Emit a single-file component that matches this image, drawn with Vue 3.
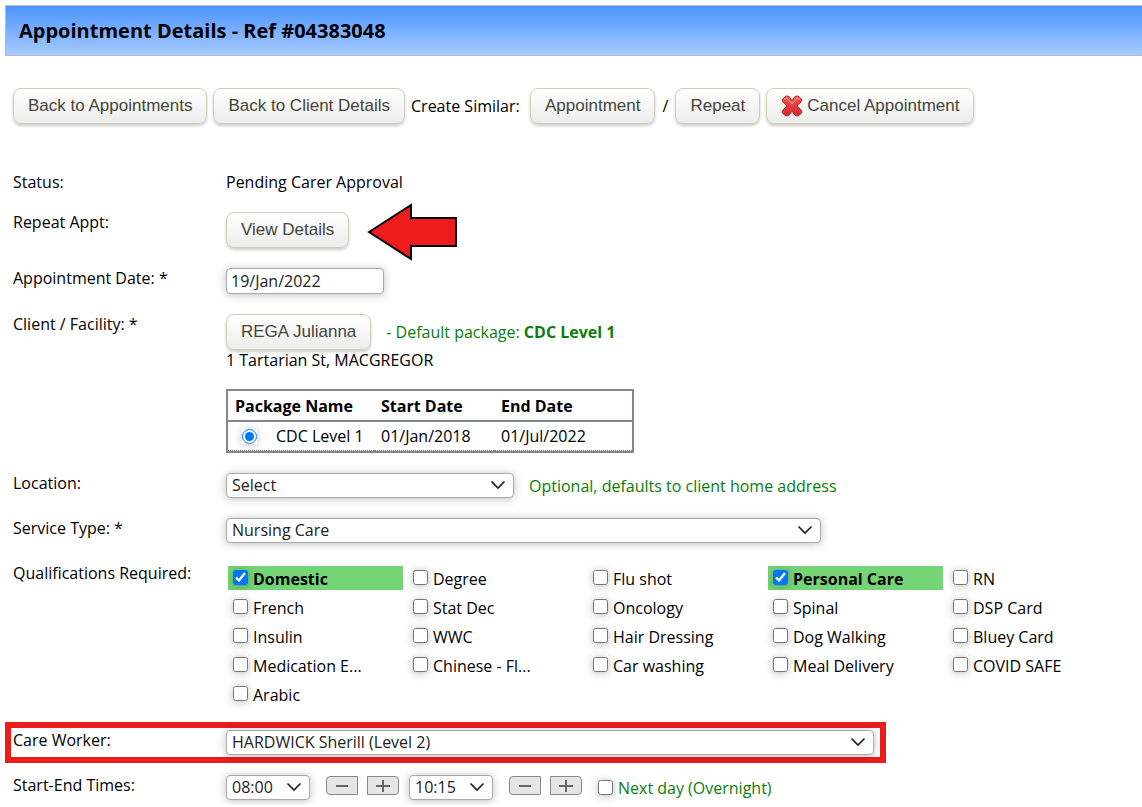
<script setup>
import { ref } from 'vue'

const packages = [{ name: 'CDC Level 1', start: '01/Jan/2018', end: '01/Jul/2022' }]
const chosenPackage = ref('CDC Level 1')
const date = ref('19/Jan/2022')
const overnight = ref(false)

const qualifications = ref(
  [
    'Domestic', 'Degree', 'Flu shot', 'Personal Care', 'RN',
    'French', 'Stat Dec', 'Oncology', 'Spinal', 'DSP Card',
    'Insulin', 'WWC', 'Hair Dressing', 'Dog Walking', 'Bluey Card',
    'Medication E...', 'Chinese - Fl...', 'Car washing', 'Meal Delivery', 'COVID SAFE',
    'Arabic'
  ].map((name) => ({ name, on: name === 'Domestic' || name === 'Personal Care' }))
)
</script>

<template>
  <div class="page">
    <header class="title-bar">
      <h1>Appointment Details - Ref #04383048</h1>
    </header>

    <nav class="toolbar">
      <button type="button" class="btn">Back to Appointments</button>
      <button type="button" class="btn">Back to Client Details</button>
      <span class="caption">Create Similar:</span>
      <button type="button" class="btn">Appointment</button>
      <span class="slash">/</span>
      <button type="button" class="btn">Repeat</button>
      <button type="button" class="btn">
        <svg class="cross" viewBox="0 0 22 22" aria-hidden="true">
          <defs>
            <linearGradient id="crossFill" x1="0" y1="0" x2="0" y2="1">
              <stop offset="0" stop-color="#ef5350" />
              <stop offset="1" stop-color="#d6282c" />
            </linearGradient>
          </defs>
          <path d="M5.2 1 L8 1.4 L11 5.6 L14 1.4 L17 1 L20.8 4.4 L20.4 6.4 L16 11 L20.4 15.4 L20.8 17.8 L17.2 21 L14.4 20.6 L11 16.4 L7.6 20.6 L4.8 21 L1.2 17.8 L1.6 15.4 L6 11 L1.6 6.4 L1.2 4.4 Z" fill="url(#crossFill)" stroke="#b52226" stroke-linejoin="round" />
          <path d="M3.4 4.6 L5.8 2.8 L11 8.6 L16.2 2.8 L18.6 4.8" fill="none" stroke="#f8908c" stroke-width="1.2" />
        </svg>
        Cancel Appointment
      </button>
    </nav>

    <form class="form" @submit.prevent>
      <div class="row">
        <span class="label">Status:</span>
        <div class="value">Pending Carer Approval</div>
      </div>

      <div class="row">
        <span class="label">Repeat Appt:</span>
        <div class="value line">
          <span class="pointed">
            <button type="button" class="btn">View Details</button>
            <svg class="arrow" viewBox="0 0 90 58" aria-hidden="true">
              <path d="M2 29 L44 2 V15 H89 V43 H44 V56 Z" fill="#ed1c1c" stroke="#000" stroke-width="2" />
            </svg>
          </span>
        </div>
      </div>

      <div class="row">
        <label class="label" for="date">Appointment Date: *</label>
        <div class="value line"><input id="date" v-model="date" class="field date" type="text" /></div>
      </div>

      <div class="row">
        <span class="label">Client / Facility: *</span>
        <div class="value">
          <div class="line spaced">
            <button type="button" class="btn">REGA Julianna</button>
            <span class="hint">- Default package: <b>CDC Level 1</b></span>
          </div>
          <div>1 Tartarian St, MACGREGOR</div>
          <table class="packages">
            <colgroup><col class="col-pick" /><col class="col-name" /><col class="col-start" /><col /></colgroup>
            <thead>
              <tr><th colspan="2">Package Name</th><th>Start Date</th><th>End Date</th></tr>
            </thead>
            <tbody>
              <tr v-for="p in packages" :key="p.name">
                <td class="pick"><input id="pkg" v-model="chosenPackage" type="radio" name="package" :value="p.name" /></td>
                <td><label for="pkg">{{ p.name }}</label></td>
                <td>{{ p.start }}</td>
                <td>{{ p.end }}</td>
              </tr>
            </tbody>
          </table>
        </div>
      </div>

      <div class="row">
        <label class="label" for="location">Location:</label>
        <div class="value line spaced">
          <span class="picker w-location">
            <select id="location" class="field"><option>Select</option></select>
            <svg class="chevron" viewBox="0 0 16 10" aria-hidden="true"><path d="M1.5 1.5 L8 8 L14.5 1.5" /></svg>
          </span>
          <span class="hint">Optional, defaults to client home address</span>
        </div>
      </div>

      <div class="row">
        <label class="label" for="service">Service Type: *</label>
        <div class="value line">
          <span class="picker w-service">
            <select id="service" class="field"><option>Nursing Care</option></select>
            <svg class="chevron" viewBox="0 0 16 10" aria-hidden="true"><path d="M1.5 1.5 L8 8 L14.5 1.5" /></svg>
          </span>
        </div>
      </div>

      <div class="row">
        <span class="label">Qualifications Required:</span>
        <div class="value quals">
          <label v-for="q in qualifications" :key="q.name" class="qual" :class="{ on: q.on }">
            <input v-model="q.on" type="checkbox" />
            <span>{{ q.name }}</span>
          </label>
        </div>
      </div>

      <div class="row callout">
        <label class="label" for="worker">Care Worker:</label>
        <div class="value line">
          <span class="picker w-worker">
            <select id="worker" class="field"><option>HARDWICK Sherill (Level 2)</option></select>
            <svg class="chevron" viewBox="0 0 16 10" aria-hidden="true"><path d="M1.5 1.5 L8 8 L14.5 1.5" /></svg>
          </span>
        </div>
      </div>

      <div class="row">
        <label class="label" for="start">Start-End Times:</label>
        <div class="value line times">
          <span class="picker w-time">
            <select id="start" class="field"><option>08:00</option></select>
            <svg class="chevron" viewBox="0 0 16 10" aria-hidden="true"><path d="M1.5 1.5 L8 8 L14.5 1.5" /></svg>
          </span>
          <span class="steps">
            <button type="button" class="step minus" aria-label="Earlier start"><svg viewBox="0 0 14 14" aria-hidden="true"><path d="M1 7 H13" /></svg></button>
            <button type="button" class="step plus" aria-label="Later start"><svg viewBox="0 0 14 14" aria-hidden="true"><path d="M0 7 H14 M7 1 V13" /></svg></button>
          </span>
          <span class="picker w-time">
            <select id="end" class="field" aria-label="End time"><option>10:15</option></select>
            <svg class="chevron" viewBox="0 0 16 10" aria-hidden="true"><path d="M1.5 1.5 L8 8 L14.5 1.5" /></svg>
          </span>
          <span class="steps">
            <button type="button" class="step minus" aria-label="Earlier end"><svg viewBox="0 0 14 14" aria-hidden="true"><path d="M1 7 H13" /></svg></button>
            <button type="button" class="step plus" aria-label="Later end"><svg viewBox="0 0 14 14" aria-hidden="true"><path d="M0 7 H14 M7 1 V13" /></svg></button>
          </span>
          <label class="overnight hint">
            <input v-model="overnight" type="checkbox" />
            <span>Next day (Overnight)</span>
          </label>
        </div>
      </div>
    </form>
  </div>
</template>

<style>
body {
  background: #fff;
}
</style>

<style scoped>
.page {
  padding: 5px 0 5px 5px;
  font-family: "Trebuchet MS", "Open Sans", "Noto Sans", sans-serif;
  font-size: 16px;
  line-height: 20px;
  color: #000;
}
.title-bar {
  border: 1px solid #b4bccb;
  border-right: 0;
  background: linear-gradient(#4b94ff, #a6caff);
  padding: 12px 13px;
}
h1 {
  margin: 0;
  font-size: 20px;
  line-height: 25px;
  font-weight: 700;
}
.toolbar {
  display: flex;
  flex-wrap: wrap;
  align-items: center;
  gap: 6px;
  padding: 32px 8px 0;
}
.caption {
  min-width: 113px;
}
.slash {
  min-width: 8px;
  text-align: center;
}
.btn {
  display: inline-flex;
  align-items: center;
  gap: 4px;
  height: 36px;
  padding: 0 14px;
  border: 1px solid #cdcfb8;
  border-radius: 8px;
  background: linear-gradient(#fff, #ededed);
  box-shadow: 0 2px 3px rgba(0, 0, 0, 0.2);
  color: #44443a;
  font-family: Arial, "Liberation Sans", sans-serif;
  font-size: 17px;
  white-space: nowrap;
}
.cross {
  width: 22px;
  height: 22px;
}
.form {
  display: flex;
  flex-direction: column;
  gap: 20px;
  padding: 48px 19px 0 8px;
}
.row {
  display: flex;
}
.label {
  flex: 0 0 213px;
}
.value {
  flex: 1;
  min-width: 0;
}
.line {
  display: flex;
  align-items: center;
}
.spaced {
  gap: 15px;
}
.hint {
  color: #0a7d0a;
}
.pointed {
  position: relative;
  display: flex;
}
.arrow {
  position: absolute;
  left: 100%;
  top: 50%;
  width: 90px;
  height: 58px;
  margin: -27px 0 0 18px;
}
.field {
  box-sizing: border-box;
  width: 100%;
  height: 25px;
  margin: 0;
  padding: 0 5px;
  border: 1px solid #a9a9a9;
  border-radius: 4px;
  background: #fff;
  box-shadow: 0 1px 8px rgba(0, 0, 0, 0.25);
  color: #222;
  font: inherit;
  line-height: 23px;
  appearance: none;
}
.date {
  width: 158px;
  height: 26px;
  padding: 0 4px;
}
.picker {
  position: relative;
  display: flex;
}
.w-location { width: 288px; }
.w-service { width: 595px; }
.w-worker { width: 648px; }
.w-time { width: 84px; }
.chevron {
  position: absolute;
  right: 8px;
  top: 7px;
  width: 16px;
  height: 10px;
  pointer-events: none;
}
.chevron path {
  fill: none;
  stroke: #222;
  stroke-width: 1.7;
}
.packages {
  width: 408px;
  margin-top: 19px;
  border: 2px solid #85888e;
  border-collapse: separate;
  border-spacing: 0;
  table-layout: fixed;
}
.col-pick { width: 41px; }
.col-name { width: 105px; }
.col-start { width: 120px; }
.packages th,
.packages td {
  padding: 0 7px;
  text-align: left;
  white-space: nowrap;
}
.packages th {
  height: 29px;
  border-bottom: 2px solid #85888e;
}
.packages td {
  height: 28px;
  border-bottom: 1px dotted #777;
}
.packages .pick {
  padding: 0 0 0 14px;
}
input[type="radio"],
input[type="checkbox"] {
  width: 15px;
  height: 15px;
  margin: 0;
  box-shadow: 0 1px 8px rgba(0, 0, 0, 0.25);
  accent-color: #0075ff;
}
.pick input {
  display: block;
  border-radius: 50%;
}
.quals {
  display: grid;
  grid-template-columns: repeat(5, 1fr);
  gap: 5px;
  padding: 3px 0 4px 2px;
}
.qual {
  display: flex;
  align-items: flex-start;
  gap: 5px;
  height: 24px;
  padding: 0 5px;
  box-sizing: border-box;
  line-height: 27px;
  white-space: nowrap;
}
.qual input {
  margin-top: 4px;
}
.qual.on {
  background: #74d476;
  font-weight: 700;
}
.callout {
  max-width: 865px;
  outline: 6px solid #ed1c1c;
  outline-offset: 2px;
}
.times {
  gap: 16px;
}
.steps {
  display: flex;
  gap: 9px;
  padding-bottom: 4px;
}
.steps + .picker {
  margin-left: -6px;
}
.step {
  display: grid;
  place-items: center;
  width: 32px;
  height: 19px;
  padding: 0;
  border: 1px solid #888;
  background: #e6e6e6;
}
.minus {
  border-radius: 4px 0 0 4px;
}
.plus {
  border-radius: 0 4px 4px 0;
}
.step svg {
  width: 14px;
  height: 14px;
}
.step path {
  stroke: #666;
  stroke-width: 2;
}
.overnight {
  display: flex;
  align-items: center;
  gap: 5px;
}
</style>
